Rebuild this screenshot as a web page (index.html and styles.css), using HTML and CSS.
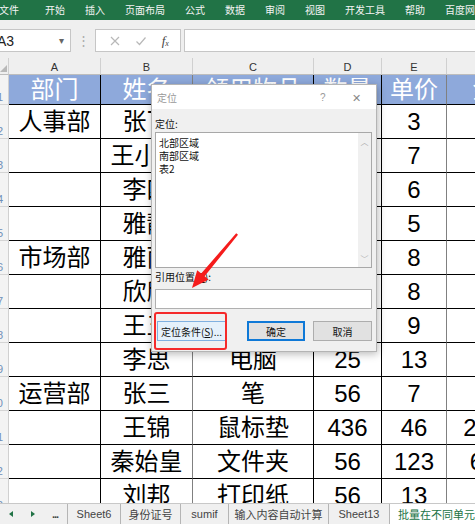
FILE: index.html
```html
<!DOCTYPE html>
<html lang="zh">
<head>
<meta charset="utf-8">
<title>定位</title>
<link rel="stylesheet" href="styles.css">
</head>
<body>
<div class="app">
  <div class="ribbon">
    <span class="first">文件</span><span>开始</span><span>插入</span><span>页面布局</span><span>公式</span><span>数据</span><span>审阅</span><span>视图</span><span>开发工具</span><span>帮助</span><span>百度网盘</span>
  </div>
  <div class="fbar">
    <div class="namebox"><span class="ref">A3</span><span class="caret">▾</span></div>
    <div class="dots">⋮</div>
    <div class="fbtns">
      <svg width="12" height="12" viewBox="0 0 12 12"><path d="M2 2 L10 10 M10 2 L2 10" stroke="#b8b8b8" stroke-width="1.2" fill="none"/></svg>
      <svg width="12" height="12" viewBox="0 0 12 12"><path d="M1.5 6.5 L4.5 9.5 L10.5 2.5" stroke="#b8b8b8" stroke-width="1.2" fill="none"/></svg>
      <span class="fx">f<sub>x</sub></span>
    </div>
    <div class="finput"></div>
  </div>
  <div class="sheet">
    <div class="corner"><span class="tri"></span></div><div class="ch">A</div><div class="ch">B</div><div class="ch">C</div><div class="ch">D</div><div class="ch">E</div><div class="ch">F</div>

    <div class="rh">1</div><div class="c hd">部门</div><div class="c hd g">姓名</div><div class="c hd">领用物品</div><div class="c hd">数量</div><div class="c hd g">单价</div><div class="c hd">金额</div>

    <div class="rh">2</div><div class="c">人事部</div><div class="c g">张飞</div><div class="c">铅笔</div><div class="c">10</div><div class="c g">3</div><div class="c">30</div>
    <div class="rh">3</div><div class="c"></div><div class="c g">王小明</div><div class="c">本子</div><div class="c">5</div><div class="c g">7</div><div class="c">35</div>
    <div class="rh">4</div><div class="c"></div><div class="c g">李四</div><div class="c">订书机</div><div class="c">2</div><div class="c g">6</div><div class="c">12</div>
    <div class="rh">5</div><div class="c"></div><div class="c g">雅静</div><div class="c">胶水</div><div class="c">4</div><div class="c g">5</div><div class="c">20</div>
    <div class="rh">6</div><div class="c">市场部</div><div class="c g">雅丽</div><div class="c">笔记本</div><div class="c">6</div><div class="c g">8</div><div class="c">48</div>
    <div class="rh">7</div><div class="c"></div><div class="c g">欣欣</div><div class="c">胶带</div><div class="c">3</div><div class="c g">8</div><div class="c">24</div>
    <div class="rh">8</div><div class="c"></div><div class="c g">王五</div><div class="c">剪刀</div><div class="c">2</div><div class="c g">9</div><div class="c">18</div>
    <div class="rh">9</div><div class="c"></div><div class="c g">李思</div><div class="c">电脑</div><div class="c">25</div><div class="c g">13</div><div class="c">325</div>
    <div class="rh">10</div><div class="c">运营部</div><div class="c g">张三</div><div class="c">笔</div><div class="c">56</div><div class="c g">7</div><div class="c">392</div>
    <div class="rh">11</div><div class="c"></div><div class="c g">王锦</div><div class="c">鼠标垫</div><div class="c">436</div><div class="c g">46</div><div class="c">20056</div>
    <div class="rh">12</div><div class="c"></div><div class="c g">秦始皇</div><div class="c">文件夹</div><div class="c">56</div><div class="c g">123</div><div class="c">6888</div>
    <div class="rh">13</div><div class="c"></div><div class="c g">刘邦</div><div class="c">打印纸</div><div class="c">56</div><div class="c g">13</div><div class="c">728</div>
  </div>
  <div class="tabs">
    <div class="nav"><span class="tl"></span><span class="tr"></span><span class="more">...</span></div>
    <div class="tab w53">Sheet6</div>
    <div class="tab w60">身份证号</div>
    <div class="tab w48">sumif</div>
    <div class="tab w100">输入内容自动计算</div>
    <div class="tab w61">Sheet13</div>
    <div class="tab active">批量在不同单元格</div>
  </div>

  <div class="dialog">
    <div class="dtitle"><span class="dname">定位</span><span class="help">?</span><span class="close">✕</span></div>
    <div class="dbody">
      <div class="lbl">定位:</div>
      <div class="listbox">
        <div class="items"><div>北部区域</div><div>南部区域</div><div>表2</div></div>
        <div class="vscroll"><span>︿</span><span>﹀</span></div>
      </div>
      <div class="lbl lbl2">引用位置(<u>R</u>):</div>
      <div class="refin"></div>
      <div class="btns">
        <div class="btn special">定位条件(<u>S</u>)...</div>
        <div class="btn default">确定</div>
        <div class="btn">取消</div>
      </div>
    </div>
  </div>
  <div class="highlight"></div>
  <svg class="arrow" width="475" height="524" viewBox="0 0 475 524">
    <polygon points="238,234.8 204.6,276.3 208.6,279.6 192,288 197.2,270.2 201.2,273.5 236.2,233.2" fill="#f51c1c"/>
  </svg>
</div>
</body>
</html>
```
FILE: styles.css
```css
* { box-sizing: border-box; margin: 0; padding: 0; }
html, body { width: 475px; height: 524px; overflow: hidden; background: #fff; }
body { font-family: "Liberation Sans", "Noto Sans CJK SC", sans-serif; }

.app { position: relative; width: 475px; height: 524px; overflow: hidden; display: flex; flex-direction: column; }

/* ribbon */
.ribbon { height: 20px; flex: none; background: #217346; display: flex; align-items: center; gap: 20px; margin-left: -1px; white-space: nowrap; color: #f4f4f4; font-family: "Noto Sans CJK SC", sans-serif; font-size: 10px; line-height: 1; }
.ribbon .first { margin-right: 6px; }

/* formula bar */
.fbar { height: 38px; flex: none; background: #efefef; display: flex; align-items: flex-start; padding-top: 9px; }
.namebox { width: 71px; height: 23px; background: #fff; border: 1px solid #c6c6c6; border-left: none; display: flex; align-items: center; justify-content: space-between; padding-right: 6px; }
.namebox .ref { font-size: 14px; color: #222; margin-left: -3px; }
.namebox .caret { font-size: 10px; color: #666; }
.dots { width: 24px; height: 23px; display: flex; align-items: center; justify-content: center; color: #aaa; font-size: 13px; }
.fbtns { width: 86px; height: 23px; background: #fff; border: 1px solid #c6c6c6; display: flex; align-items: center; justify-content: space-around; padding: 0 4px 0 6px; }
.fx { font-family: "Liberation Serif", serif; font-style: italic; font-size: 13px; color: #444; }
.fx sub { font-size: 8px; vertical-align: -1px; }
.finput { flex: 1; height: 23px; margin-left: 3px; background: #fff; border: 1px solid #c6c6c6; border-right: none; }

/* sheet grid */
.sheet { flex: 1; overflow: hidden; display: grid; grid-template-columns: 9px 92px 92px 121px 68px 65px 100px; grid-template-rows: 17px 30px repeat(12, 34px); }
.corner { background: #efefef; border-right: 1px solid #d0d0d0; border-bottom: 1px solid #bdbdbd; position: relative; }
.corner .tri { position: absolute; right: 1px; bottom: 2px; width: 0; height: 0; border-left: 7px solid transparent; border-bottom: 7px solid #b8b8b8; }
.ch { background: #efefef; border-right: 1px solid #d0d0d0; border-bottom: 1px solid #bdbdbd; display: flex; align-items: center; justify-content: center; font-size: 11px; color: #333; padding-top: 2px; }
.rh { background: #f3f3f3; border-right: 1px solid #d0d0d0; border-bottom: 1px solid #d4d4d4; overflow: hidden; display: flex; align-items: flex-end; justify-content: flex-end; padding: 0 5px 1px 0; font-size: 11px; color: #6f8fb8; line-height: 1; white-space: nowrap; }
.c { border-right: 1px solid #000; border-bottom: 1px solid #000; display: flex; align-items: center; justify-content: center; font-size: 24px; line-height: 1; color: #000; white-space: nowrap; overflow: hidden; }
.c.g { border-right-color: #808080; }
.c.hd { background: #8ea9db; color: #fff; }

/* sheet tabs */
.tabs { height: 21px; flex: none; background: #f0f0f0; border-top: 1px solid #c8c8c8; display: flex; align-items: stretch; font-size: 11px; color: #444; white-space: nowrap; }
.nav { width: 67px; display: flex; align-items: center; padding-left: 9px; }
.nav .tl { width: 0; height: 0; border-top: 3px solid transparent; border-bottom: 3px solid transparent; border-right: 4px solid #217346; }
.nav .tr { width: 0; height: 0; border-top: 3px solid transparent; border-bottom: 3px solid transparent; border-left: 4px solid #217346; margin-left: 18px; }
.nav .more { margin-left: 17px; font-size: 11px; color: #444; font-weight: bold; letter-spacing: -1px; }
.tab { border-left: 1px solid #b5b5b5; display: flex; align-items: center; justify-content: center; }
.w53 { width: 53px; } .w60 { width: 60px; } .w48 { width: 48px; } .w100 { width: 100px; } .w61 { width: 61px; }
.tab.active { flex: 1; background: #fff; color: #217346; justify-content: flex-start; padding-left: 8px; overflow: hidden; }

/* dialog */
.dialog { position: absolute; left: 151px; top: 84px; width: 226px; height: 268px; background: #f0f0f0; border: 1px solid #b4b4b4; box-shadow: 1px 2px 8px rgba(0,0,0,0.28); display: flex; flex-direction: column; font-family: "Noto Sans CJK SC", sans-serif; font-size: 10px; line-height: 13px; color: #111; }
.dtitle { height: 24px; background: #fff; display: flex; align-items: center; padding-left: 5px; color: #999; }
.dname { flex: 1; font-size: 10px; }
.help { width: 12px; color: #999; font-family: "Liberation Sans", sans-serif; font-size: 10px; margin-right: 20px; }
.close { width: 14px; margin-right: 10px; color: #888; font-size: 11px; }
.dbody { flex: 1; display: flex; flex-direction: column; padding: 8px 4px 0 3px; }
.lbl { height: 14px; }
.lbl2 { margin-top: 2px; }
.listbox { margin-top: 1px; height: 136px; background: #fff; border: 1px solid #a8a8a8; display: flex; }
.items { flex: 1; padding: 3px 0 0 3px; }
.vscroll { width: 13px; background: #f0f0f0; display: flex; flex-direction: column; justify-content: space-between; align-items: center; color: #b0b0b0; font-size: 8px; padding: 2px 0; }
.refin { margin-top: 5px; height: 20px; background: #fff; border: 1px solid #b0b0b0; }
.btns { margin-top: 12px; display: flex; }
.btn { height: 20px; width: 59px; background: #e1e1e1; border: 1px solid #adadad; display: flex; align-items: center; justify-content: center; }
.btn + .btn { margin-left: 8px; }
.btn.special { width: 69px; margin-left: 2px; background: #e5f1fb; border-color: #7fb0e0; }
.btn.default { width: 58px; margin-left: auto; border: 2px solid #0f79d7; }

.highlight { position: absolute; left: 154px; top: 312px; width: 73px; height: 38px; border: 2px solid #f52a2a; border-radius: 3px; }
.arrow { position: absolute; left: 0; top: 0; pointer-events: none; }
```
